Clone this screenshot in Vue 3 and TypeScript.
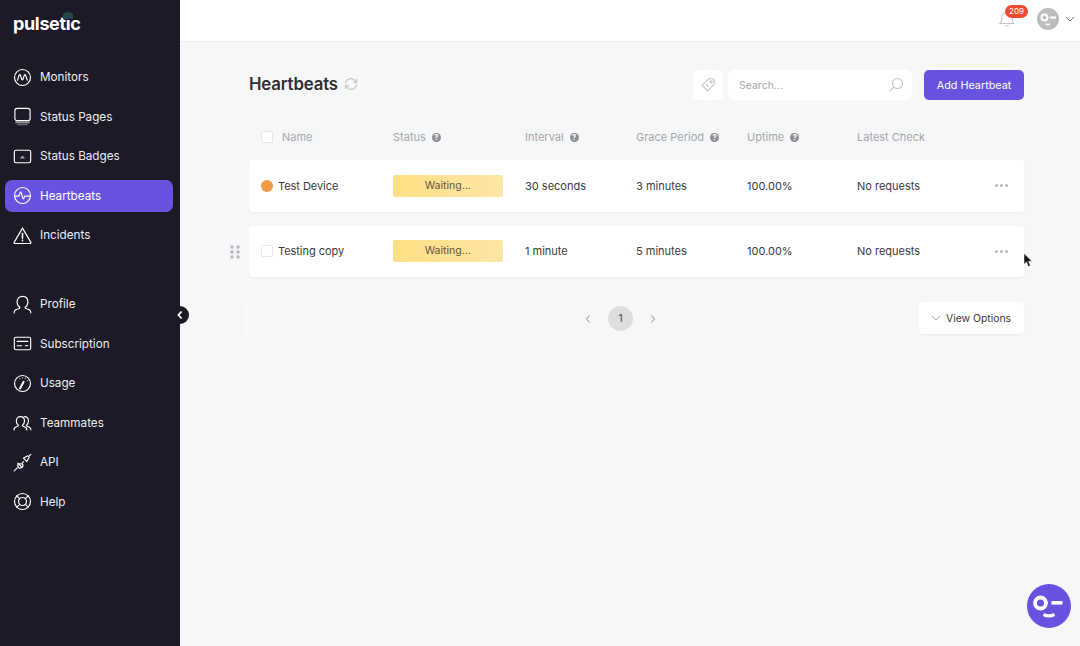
<script setup lang="ts">
interface NavItem {
  label: string
  icon: string
  gapBefore?: boolean
  active?: boolean
}

interface Beat {
  name: string
  dot: boolean
  interval: string
  grace: string
}

// icon inner markup is kept per item, all drawn on a 20x20 box
const navItems: NavItem[] = [
  { label: 'Monitors', icon: '<circle cx="10" cy="10" r="8.4"/><path d="M4.800 12.800 6.500 7.400q.6-1.200 1.200 0l1.600 4.700q.5 1 1.100 0l1.600-4.700q.6-1.200 1.200 0l1.800 5.400"/>' },
  { label: 'Status Pages', icon: '<rect x="2" y="1.400" width="16" height="13" rx="2.400"/><path d="M3.200 16.200h13.600" stroke-opacity=".55" stroke-width="1.800"/><path d="M5 18.400h10" stroke-opacity=".35" stroke-width="1.400"/>' },
  { label: 'Status Badges', icon: '<rect x="1.400" y="3.400" width="17.200" height="13.200" rx="1.800"/><path d="M7.200 12 10 9l2.800 3z" fill="#fff" fill-opacity=".6" stroke="none"/>' },
  { label: 'Heartbeats', active: true, icon: '<circle cx="10" cy="10" r="8.400"/><path d="M1.800 10.600h4.400l1.400-3.600q.6-1 1.100 0l1.600 6q.5 1 1.100 0l1.100-2.400h5.700"/>' },
  { label: 'Incidents', icon: '<path d="M10 2.200 18.800 17.200a.8.8 0 0 1-.7 1.200H1.900a.8.8 0 0 1-.7-1.200z"/><path d="M10 7.800v5" stroke-width="1.600"/><path d="M10 15v.5" stroke-width="1.600"/>' },
  { label: 'Profile', gapBefore: true, icon: '<path d="M1.200 18.800c0-2.400 1.500-3.500 3.800-4 1.500-.4 2.300-.9 2.300-1.900-1.700-1-3-3-3-5.600C4.300 3.800 6.600 1.400 10 1.400s5.700 2.400 5.700 5.900c0 2.600-1.300 4.600-3 5.600 0 1 .8 1.500 2.300 1.900 2.300.5 3.800 1.600 3.800 4"/>' },
  { label: 'Subscription', icon: '<rect x="1.400" y="3.400" width="17.200" height="13.200" rx="1.600"/><path d="M4.400 7.800h11.200M4.400 12.400h4.600M13 12.400h2.600"/>' },
  { label: 'Usage', icon: '<circle cx="10" cy="10" r="8.400"/><path d="m7.400 15.200 3.800-7" stroke-width="2"/><path d="M12.800 4.600l.4-.4M15.200 7l.5-.3M10 3.800v.5M7 4.600l.3.4" stroke-opacity=".6"/>' },
  { label: 'Teammates', icon: '<path d="M1 17.800c0-2 1.200-2.900 2.900-3.300 1.200-.3 1.800-.8 1.800-1.600-1.200-.8-2.200-2.400-2.200-4.400 0-2.700 1.700-4.700 4.300-4.700s4.300 2 4.300 4.700c0 2-1 3.600-2.200 4.400 0 .8.600 1.300 1.800 1.600 1.700.4 2.900 1.300 2.900 3.300"/><path d="M11.800 3.900c2.700-.4 4.500 1.700 4.500 4.500 0 2-1 3.600-2.200 4.400 0 .8.600 1.300 1.800 1.600 1.700.4 2.900 1.300 2.900 3.300"/>' },
  { label: 'API', icon: '<path d="M1.200 18.800 4.600 15.600"/><path d="m5 10.600 4.400 4.400"/><path d="M5.800 11.400a2.900 2.900 0 0 0 0 3.800 2.900 2.900 0 0 0 3.800-.2 2.800 2.800 0 0 0 .2-3.700z"/><path d="M9.800 10.400l1.400-1.400"/><path d="M11 5.400 14.600 9 17 4.400 15.600 3z"/><path d="M17 3l1.800-1.600"/>' },
  { label: 'Help', icon: '<circle cx="10" cy="10" r="8.400"/><circle cx="10" cy="10" r="4.200"/><path d="m4 4 3 3M16 4l-3 3M4 16l3-3M16 16l-3-3"/>' },
]

const beats: Beat[] = [
  { name: 'Test Device', dot: true, interval: '30 seconds', grace: '3 minutes' },
  { name: 'Testing copy', dot: false, interval: '1 minute', grace: '5 minutes' },
]

const columns = [
  { label: 'Status', help: true },
  { label: 'Interval', help: true },
  { label: 'Grace Period', help: true },
  { label: 'Uptime', help: true },
  { label: 'Latest Check', help: false },
]
</script>

<template>
  <div class="app-shell">
    <aside class="sidebar">
      <div class="logo">
        pulsetic
        <span class="logo-dot"></span>
      </div>
      <nav class="nav">
        <a
          v-for="item in navItems"
          :key="item.label"
          class="nav-item"
          :class="{ active: item.active, spaced: item.gapBefore }"
        >
          <svg class="nav-icon" viewBox="0 0 20 20" v-html="item.icon"></svg>
          <span>{{ item.label }}</span>
        </a>
      </nav>
      <button class="collapse-btn">
        <svg width="8" height="10" viewBox="0 0 8 10"><path d="M5.600 1.500 2.400 5l3.200 3.500" /></svg>
      </button>
    </aside>

    <div class="main">
      <header class="topbar">
        <div class="bell">
          <svg width="18" height="18" viewBox="0 0 18 18">
            <path d="M2 13.500c1.200-1 1.700-2 1.700-4V7.600C3.700 4.500 6 2.300 9 2.300s5.300 2.200 5.300 5.300v1.900c0 2 .5 3 1.700 4z" />
            <path d="M7.500 15.800h3" />
          </svg>
          <span class="badge">209</span>
        </div>
        <div class="avatar">
          <svg width="22" height="22" viewBox="0 0 44 44">
            <circle cx="22" cy="22" r="22" fill="#bdbdbd" />
            <circle cx="15" cy="19" r="6" fill="none" stroke="#fff" stroke-width="4" />
            <rect x="26" y="17" width="12" height="4" fill="#fff" />
            <path d="M17 32q5 2.500 9 0" fill="none" stroke="#fff" stroke-width="3" />
          </svg>
        </div>
        <svg class="caret" width="10" height="6" viewBox="0 0 10 6"><path d="M1 1l4 4 4-4" /></svg>
      </header>

      <section class="content">
        <div class="title-row">
          <h1>Heartbeats</h1>
          <svg class="refresh" width="14" height="14" viewBox="0 0 14 14">
            <path d="M1.500 7a5.300 5.300 0 0 1 9.500-3.200l1.400 1.500M12.500 7A5.300 5.300 0 0 1 3 10.200L1.600 8.700" />
            <path d="M12.500 1.800v3.600H9M1.500 12.200V8.600H5" />
          </svg>
          <div class="tools">
            <button class="tag-btn">
              <svg width="16" height="16" viewBox="0 0 16 16">
                <path d="M9 1.800h4.200a1 1 0 0 1 1 1V7L7.800 14 2 8.200z" />
                <circle cx="11.200" cy="4.800" r="1" />
                <path d="M6 7.200 8.800 10" />
              </svg>
            </button>
            <div class="search">
              <span>Search...</span>
              <svg width="16" height="16" viewBox="0 0 16 16">
                <circle cx="9.500" cy="6.500" r="5" />
                <path d="M5.800 10.200 1.800 14.200" />
              </svg>
            </div>
            <button class="add-btn">Add Heartbeat</button>
          </div>
        </div>

        <div class="table-head">
          <div class="name-head">
            <span class="check"></span>
            <span>Name</span>
          </div>
          <div v-for="col in columns" :key="col.label" class="head-cell">
            <span>{{ col.label }}</span>
            <span v-if="col.help" class="help">?</span>
          </div>
        </div>

        <div class="rows">
          <div v-for="beat in beats" :key="beat.name" class="row">
            <svg v-if="!beat.dot" class="drag" width="10" height="14" viewBox="0 0 10 14">
              <circle v-for="p in 6" :key="p" :cx="p % 2 ? 2 : 8" :cy="2 + Math.floor((p - 1) / 2) * 5" r="1.700" />
            </svg>
            <div class="name-cell">
              <span v-if="beat.dot" class="dot"></span>
              <span v-else class="check"></span>
              <span>{{ beat.name }}</span>
            </div>
            <div><span class="waiting">Waiting...</span></div>
            <div>{{ beat.interval }}</div>
            <div>{{ beat.grace }}</div>
            <div>100.00%</div>
            <div>No requests</div>
            <div class="more"><i></i><i></i><i></i></div>
          </div>
        </div>

        <div class="footer-row">
          <div class="pager">
            <svg width="8" height="10" viewBox="0 0 8 10"><path d="M5.500 1.500 2.500 5l3 3.500" /></svg>
            <span class="page">1</span>
            <svg width="8" height="10" viewBox="0 0 8 10"><path d="M2.500 1.500 5.500 5l-3 3.500" /></svg>
          </div>
          <button class="view-btn">
            <svg width="10" height="6" viewBox="0 0 10 6"><path d="M1 1l4 4 4-4" /></svg>
            View Options
          </button>
        </div>
        <div class="footer-line"></div>
      </section>
    </div>

    <svg class="cursor" width="10" height="15" viewBox="0 0 10 15">
      <path d="M1 .5v10.800l2.600-2.300 1.700 4.600 2-.8L5.500 8.300H9z" fill="#111" stroke="#fff" stroke-width=".5" />
    </svg>

    <button class="chat">
      <svg width="44" height="44" viewBox="0 0 44 44">
        <circle cx="13.500" cy="19" r="5.500" fill="none" stroke="#fff" stroke-width="3.800" />
        <rect x="24.500" y="17" width="11" height="3.600" fill="#fff" />
        <path d="M16.500 30.500q5.500 2.800 11 0" fill="none" stroke="#fff" stroke-width="3.200" />
      </svg>
    </button>
  </div>
</template>

<style>
html,
body {
  margin: 0;
  background: #f6f7f9;
}
</style>

<style scoped>
.app-shell {
  display: flex;
  position: relative;
  height: 646px;
  overflow: hidden;
  font-family: Inter, "Liberation Sans", sans-serif;
  font-size: 11px;
  color: #3a3a3e;
  background: #f6f7f9;
}

/* sidebar */
.sidebar {
  position: relative;
  flex: 0 0 180px;
  background: #1c1a27;
  box-sizing: border-box;
  padding: 11px 7px 0 5px;
}
.logo {
  position: relative;
  margin-left: 8px;
  height: 26px;
  line-height: 26px;
  font-size: 18px;
  font-weight: 700;
  letter-spacing: -0.35px;
  color: #fff;
}
.logo-dot {
  position: absolute;
  left: 50px;
  top: 1px;
  width: 10px;
  height: 7px;
  border-radius: 50% 50% 0 0;
  background: #24493f;
}
.nav {
  display: flex;
  flex-direction: column;
  margin-top: 24px;
}
.nav-item {
  display: flex;
  align-items: center;
  gap: 8px;
  height: 32px;
  margin-bottom: 7.5px;
  padding-left: 8px;
  border-radius: 7px;
  font-size: 11.7px;
  font-weight: 400;
  color: #eeeef2;
}
.nav-item.spaced {
  margin-top: 29.5px;
}
.nav-item.active {
  background: #6753e0;
  color: #fff;
}
.nav-icon {
  width: 19px;
  height: 19px;
  fill: none;
  stroke: #fff;
  stroke-width: 1.2;
  stroke-linecap: round;
  stroke-linejoin: round;
}
.collapse-btn {
  position: absolute;
  right: -9px;
  top: 306px;
  display: flex;
  align-items: center;
  justify-content: center;
  width: 18px;
  height: 18px;
  padding: 0;
  border: 0;
  border-radius: 50%;
  background: #1c1a27;
}
.collapse-btn path {
  fill: none;
  stroke: #fff;
  stroke-width: 1.8;
}

/* top bar */
.main {
  flex: 1;
  min-width: 0;
}
.topbar {
  display: flex;
  align-items: center;
  justify-content: flex-end;
  box-sizing: border-box;
  height: 42px;
  padding: 0 5px 4px 0;
  background: #fff;
  border-bottom: 1px solid #eceded;
}
.bell {
  position: relative;
  display: flex;
  margin-right: 21px;
}
.bell path {
  fill: none;
  stroke: #c6c6c6;
  stroke-width: 1.1;
  stroke-linecap: round;
}
.badge {
  position: absolute;
  left: 7px;
  top: -5px;
  width: 23px;
  height: 13px;
  border-radius: 7px;
  background: #ed4b2e;
  color: #fff;
  font-size: 8px;
  line-height: 13px;
  text-align: center;
}
.avatar {
  display: flex;
  margin-right: 6px;
}
.caret path {
  fill: none;
  stroke: #777;
  stroke-width: 1;
}

/* page */
.content {
  padding: 28px 56px 0 69px;
}
.title-row {
  display: flex;
  align-items: center;
  height: 30px;
}
h1 {
  margin: -3px 0 0;
  font-size: 16.8px;
  font-weight: 600;
  letter-spacing: -0.15px;
  color: #2e2e33;
}
.refresh {
  margin: -3px 0 0 6px;
}
.refresh path {
  fill: none;
  stroke: #c4c4c4;
  stroke-width: 1.1;
}
.tools {
  display: flex;
  align-items: stretch;
  margin-left: auto;
}
.tag-btn {
  display: flex;
  align-items: center;
  justify-content: center;
  width: 30px;
  height: 30px;
  margin-right: 5px;
  padding: 0;
  border: 0;
  border-radius: 6px;
  background: #fff;
}
.tag-btn path,
.tag-btn circle,
.search svg circle,
.search svg path {
  fill: none;
  stroke: #c4c4c4;
  stroke-width: 1.1;
}
.search {
  display: flex;
  align-items: center;
  justify-content: space-between;
  box-sizing: border-box;
  width: 184px;
  padding: 0 8px 0 11px;
  border-radius: 6px;
  background: #fff;
  font-size: 10.5px;
  color: #a8a8ac;
}
.add-btn {
  width: 100px;
  margin-left: 12px;
  border: 0;
  border-radius: 5px;
  background: #6753e0;
  color: #fff;
  font-family: inherit;
  font-size: 10.8px;
  font-weight: 400;
}

/* table: head and rows share the column widths */
.table-head,
.row {
  display: grid;
  align-items: center;
  padding-left: 12px;
}
.table-head {
  height: 30px;
  margin-top: 22px;
  margin-bottom: 8px;
  grid-template-columns: 132px 132px 111px 111px 110px 1fr;
  color: #a6a6aa;
}
.name-head,
.name-cell,
.head-cell {
  display: flex;
  align-items: center;
}
.name-head {
  gap: 9px;
}
.head-cell {
  gap: 6px;
}
.help {
  display: inline-block;
  width: 9px;
  height: 9px;
  border-radius: 50%;
  background: #8f8f93;
  color: #fff;
  font-size: 7.5px;
  font-weight: 700;
  line-height: 9px;
  text-align: center;
}
.check {
  display: inline-block;
  box-sizing: border-box;
  width: 12px;
  height: 12px;
  border: 1px solid #e6e6e8;
  border-radius: 2px;
  background: #fff;
}
.rows {
  display: flex;
  flex-direction: column;
  gap: 14px;
}
.row {
  position: relative;
  height: 51.5px;
  border-radius: 4px;
  background: #fff;
  box-shadow: 0 1px 2px rgba(30, 30, 50, 0.05);
  grid-template-columns: 132px 132px 111px 111px 110px 1fr 29px;
}
.name-cell {
  gap: 5px;
  letter-spacing: -0.05px;
}
.dot {
  width: 12px;
  height: 12px;
  border-radius: 50%;
  background: #f49a45;
}
.waiting {
  display: block;
  width: 109.5px;
  height: 22px;
  border-radius: 2px;
  background: linear-gradient(90deg, #ffdf85, #ffe6a6);
  color: #5c5540;
  font-size: 10.5px;
  line-height: 22px;
  text-align: center;
}
.more {
  display: flex;
  gap: 2px;
}
.more i {
  width: 3px;
  height: 3px;
  border-radius: 50%;
  background: #b4b4b8;
}
.drag {
  position: absolute;
  left: -19px;
  top: 19px;
  fill: #b4b4b8;
}

/* pager */
.footer-row {
  display: flex;
  align-items: center;
  justify-content: flex-end;
  position: relative;
  height: 32px;
  margin-top: 25px;
}
/* faint leftover line at the left of the pager row */
.footer-row::before {
  content: "";
  position: absolute;
  left: -3px;
  top: -2px;
  width: 1px;
  height: 40px;
  background: #fcfcfd;
}
.pager {
  position: absolute;
  left: 335px;
  top: 4px;
  display: flex;
  align-items: center;
  gap: 16px;
}
.pager path {
  fill: none;
  stroke: #8a8a8e;
  stroke-width: 1;
}
.page {
  width: 25px;
  height: 25px;
  border-radius: 50%;
  background: #dedede;
  color: #66666a;
  font-weight: 500;
  line-height: 25px;
  text-align: center;
}
.view-btn {
  display: flex;
  align-items: center;
  gap: 5px;
  width: 105px;
  height: 32px;
  padding: 0 0 0 12px;
  border: 0;
  border-radius: 4px;
  background: #fff;
  box-shadow: 0 1px 2px rgba(30, 30, 50, 0.06);
  color: #3a3a3e;
  font-family: inherit;
  font-size: 10.4px;
  font-weight: 400;
}
.view-btn path {
  fill: none;
  stroke: #aaa;
  stroke-width: 1;
}
.footer-line {
  height: 1px;
  margin: 19px 5px 0 5px;
  background: #fcfcfd;
}

/* things on top of the page */
.cursor {
  position: absolute;
  left: 1023px;
  top: 253px;
}
.chat {
  position: absolute;
  right: 9px;
  bottom: 18px;
  width: 44px;
  height: 44px;
  padding: 0;
  border: 0;
  border-radius: 50%;
  background: #6753e0;
}
.chat svg {
  display: block;
}
</style>
